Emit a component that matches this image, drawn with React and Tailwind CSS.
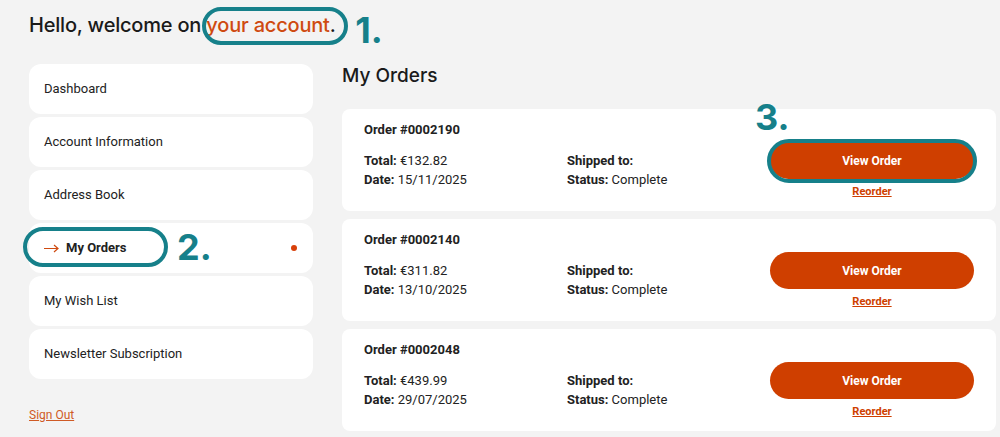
const orders = [
  { id: "0002190", total: "€132.82", date: "15/11/2025", mark: true },
  { id: "0002140", total: "€311.82", date: "13/10/2025" },
  { id: "0002048", total: "€439.99", date: "29/07/2025" },
];

const menu = [
  "Dashboard",
  "Account Information",
  "Address Book",
  "My Orders",
  "My Wish List",
  "Newsletter Subscription",
];

const Mark = ({ n, className }) => (
  <span
    className={`absolute font-['Inter',sans-serif] text-[36px] leading-none font-bold text-[#16808a] ${className}`}
  >
    {n}
  </span>
);

const OrderCard = ({ order }) => (
  <div className="relative flex h-[102px] rounded-lg bg-white pl-[22px] pr-[22px] pt-[13px]">
    <div className="flex-1 text-[13px] text-[#222]">
      <div className="leading-4 font-bold">Order #{order.id}</div>
      <div className="mt-[13px] grid grid-cols-[203px_1fr] leading-[19px]">
        <div>
          <div>
            <span className="font-bold">Total:</span> {order.total}
          </div>
          <div>
            <span className="font-bold">Date:</span> {order.date}
          </div>
        </div>
        <div>
          <div className="font-bold">Shipped to:</div>
          <div>
            <span className="font-bold">Status:</span> Complete
          </div>
        </div>
      </div>
    </div>
    <div className="flex w-[204px] flex-col items-center pt-[20px]">
      <button className="relative h-[37px] w-[204px] rounded-full bg-[#cf3f00] text-[12px] font-bold text-white">
        View Order
        {order.mark && (
          <span className="absolute -left-[3px] -top-[3px] h-[44px] w-[210px] rounded-full border-4 border-[#16808a]" />
        )}
      </button>
      <a className="mt-[5px] text-[11px] leading-4 font-bold text-[#cf3f00] underline">Reorder</a>
    </div>
    {order.mark && <Mark n="3." className="left-[413px] -top-[10px]" />}
  </div>
);

export default function App() {
  return (
    <div className="relative h-[437px] w-[1000px] overflow-hidden bg-[#f3f3f3] font-['Roboto',sans-serif] text-[#222]">
      <div className="px-[29px] pt-[11px]">
        <h1 className="inline-block font-['Inter',sans-serif] text-[20px] leading-7 font-medium tracking-[-0.2px] text-[#1a1a1a]">
          Hello, welcome on{" "}
          <span className="relative">
            <span className="text-[#cf4a10]">your account</span>.
            <span className="absolute -left-[4px] -top-[6px] h-[38px] w-[146px] rounded-full border-4 border-[#16808a]" />
            <Mark n="1." className="left-[149px] -top-[1px]" />
          </span>
        </h1>
      </div>

      <div className="mt-[25px] flex gap-[29px] pl-[29px] pr-[4px]">
        <div className="w-[284px] shrink-0">
          <nav className="flex flex-col gap-[3px]">
            {menu.map((item) =>
              item === "My Orders" ? (
                <div
                  key={item}
                  className="relative flex h-[50px] items-center rounded-xl bg-white px-[15px] text-[13px]"
                >
                  <svg width="15" height="9" viewBox="0 0 15 9" fill="none" stroke="#cf4a10" strokeWidth="1.2">
                    <path d="M0 4.5h14M10 1l4 3.5-4 3.5" />
                  </svg>
                  <span className="ml-[7px] font-bold">My Orders</span>
                  <span className="ml-auto mr-[1px] h-[6px] w-[6px] rounded-full bg-[#d8400a]" />
                  <span className="absolute -left-[6px] top-[4px] h-[40px] w-[145px] rounded-full border-4 border-[#16808a]" />
                  <Mark n="2." className="left-[148px] top-[6px]" />
                </div>
              ) : (
                <div
                  key={item}
                  className="flex h-[50px] items-center rounded-xl bg-white px-[15px] text-[13px]"
                >
                  {item}
                </div>
              )
            )}
          </nav>
          <a className="mt-[27px] block text-[12px] text-[#cf5a25] underline">Sign Out</a>
        </div>

        <div className="flex-1">
          <h2 className="font-['Inter',sans-serif] text-[19px] leading-6 font-medium text-[#1a1a1a]">My Orders</h2>
          <div className="mt-[21px] flex flex-col gap-[8px]">
            {orders.map((o) => (
              <OrderCard key={o.id} order={o} />
            ))}
          </div>
        </div>
      </div>
    </div>
  );
}
